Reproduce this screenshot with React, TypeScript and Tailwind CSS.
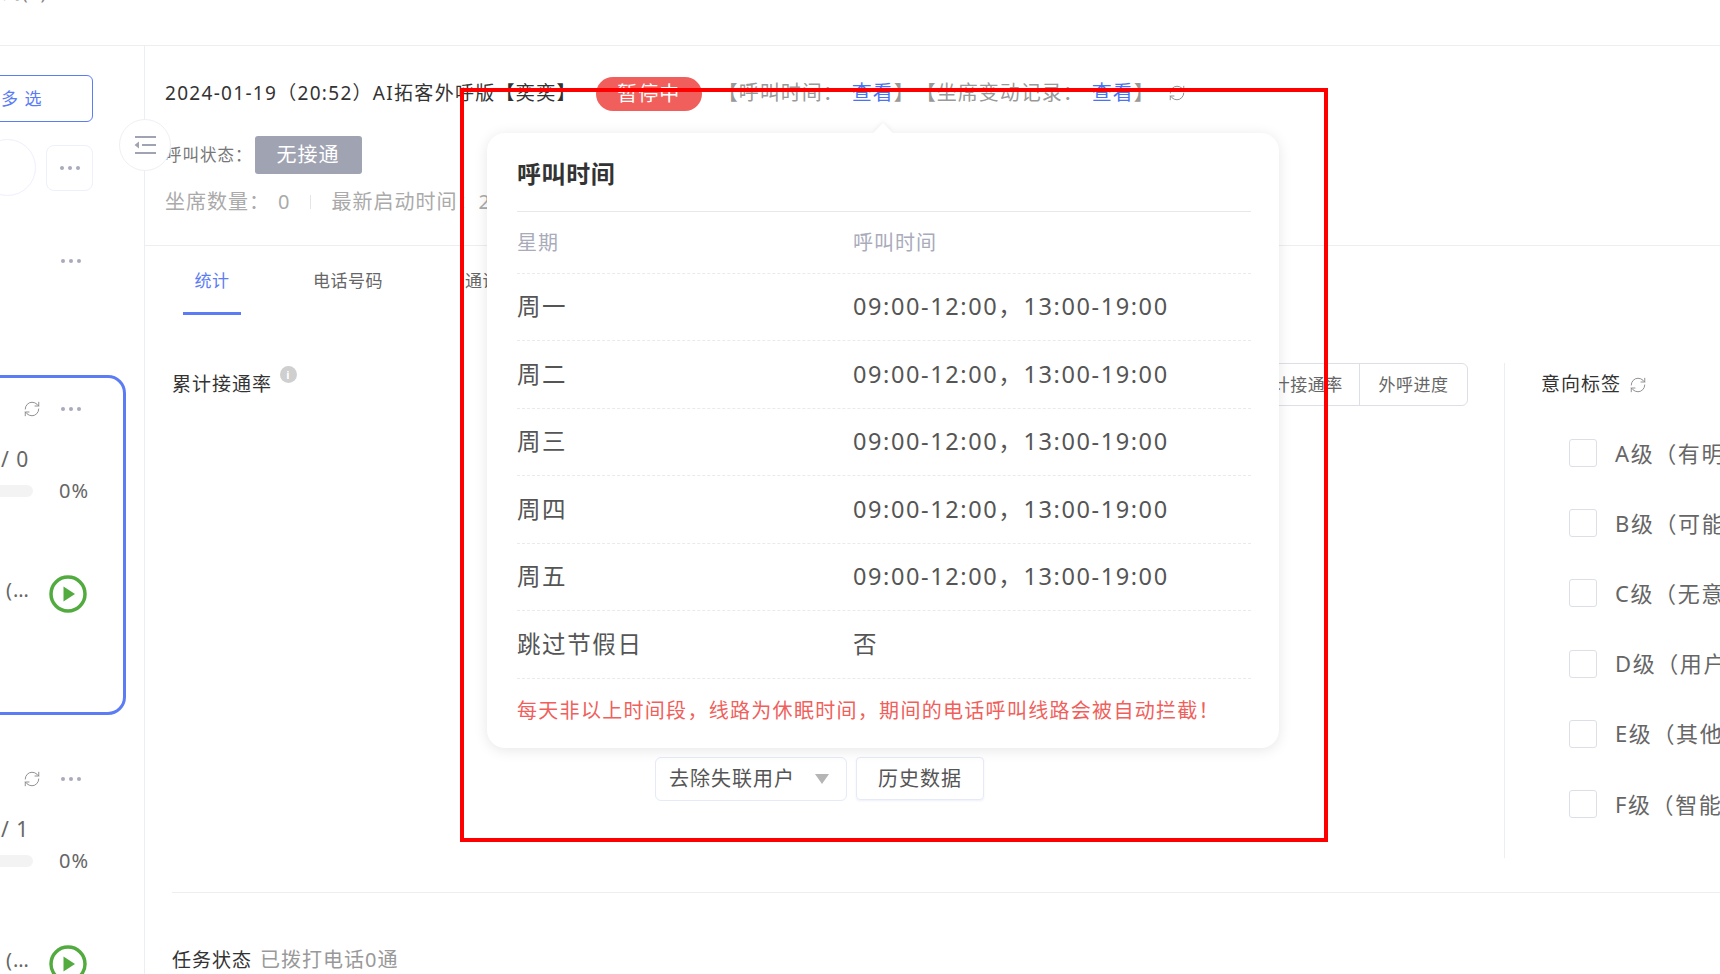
import { RefreshCw } from "lucide-react";

const schedule = [
  { day: "周一", time: "09:00-12:00，13:00-19:00" },
  { day: "周二", time: "09:00-12:00，13:00-19:00" },
  { day: "周三", time: "09:00-12:00，13:00-19:00" },
  { day: "周四", time: "09:00-12:00，13:00-19:00" },
  { day: "周五", time: "09:00-12:00，13:00-19:00" },
  { day: "跳过节假日", time: "否" },
];

const tags = [
  "A级（有明确意向）",
  "B级（可能有意向）",
  "C级（无意向）",
  "D级（用户忙）",
  "E级（其他）",
  "F级（智能标签）",
];

function Dots() {
  return (
    <div className="flex w-[20px] items-center justify-between">
      <span className="h-[4px] w-[4px] rounded-full bg-[#a9abbb]" />
      <span className="h-[4px] w-[4px] rounded-full bg-[#a9abbb]" />
      <span className="h-[4px] w-[4px] rounded-full bg-[#a9abbb]" />
    </div>
  );
}

function PlayIcon() {
  return (
    <svg width="38" height="38" viewBox="0 0 38 38" className="shrink-0">
      <circle cx="19" cy="19" r="17" fill="none" stroke="#52ab3f" strokeWidth="3.5" />
      <path d="M14.5 11.5 L26 19 L14.5 26.5 Z" fill="#52ab3f" />
    </svg>
  );
}

function TaskCard({ count, active }: { count: string; active?: boolean }) {
  return (
    <div
      className={`ml-[-20px] h-[340px] w-[146px] rounded-[18px] border-[3px] pt-[21px] ${
        active ? "border-[#5b7cf5]" : "border-transparent"
      }`}
    >
      <div className="flex h-[20px] items-center justify-end gap-[20px] pr-[42px]">
        <RefreshCw size={18} strokeWidth={1.25} color="#8a8a8a" />
        <Dots />
      </div>
      <div className="mt-[27px] flex h-[28px] items-center pl-[18px] text-[21px] text-[#666]">/&nbsp;{count}</div>
      <div className="mt-[5px] flex h-[24px] items-center gap-[26px]">
        <div className="h-[12px] w-[50px] rounded-full bg-[#f3f3f3]" />
        <span className="text-[20px] text-[#666]">0%</span>
      </div>
      <div className="mt-[72px] flex h-[38px] items-center gap-[16px] pl-[23px]">
        <span className="w-[27px] pb-[8px] text-[20px] leading-none whitespace-nowrap text-[#666]">(…</span>
        <PlayIcon />
      </div>
      {active && <div className="ml-[12px] text-[18px] leading-none text-[#666]">,</div>}
    </div>
  );
}

function Sidebar() {
  return (
    <aside className="w-[145px] shrink-0 overflow-hidden border-r border-[#eceef2]">
      <div className="mt-[29px] ml-[-20px] flex h-[47px] w-[113px] items-center rounded-[6px] border border-[#5b7cf5] pl-[20px] text-[17px] text-[#5b7cf5]">
        多 选
      </div>
      <div className="mt-[17px] flex h-[57px] items-center">
        <div className="ml-[-21px] h-[57px] w-[57px] shrink-0 rounded-full border border-[#eef0fb]" />
        <div className="ml-[10px] flex h-[46px] w-[47px] shrink-0 items-center justify-center rounded-[8px] border border-[#eef0fb]">
          <Dots />
        </div>
      </div>
      <div className="mt-[63px] ml-[61px]">
        <Dots />
      </div>
      <div className="mt-[112px] flex flex-col gap-[30px]">
        <TaskCard count="0" active />
        <TaskCard count="1" />
      </div>
    </aside>
  );
}

function HeaderInfo() {
  return (
    <div className="h-[200px] border-b border-[#eceef2] pt-[30px] pl-[20px]">
      <div className="flex h-[34px] items-center whitespace-nowrap">
        <span className="text-[19px] tracking-[1.3px] text-[#333]">2024-01-19（20:52）AI拓客外呼版【奕奕】</span>
        <span className="mt-[2px] ml-[19px] flex h-[34px] w-[106px] items-center justify-center rounded-full bg-[#f05f5c] text-[20px] text-white">
          暂停中
        </span>
        <span className="ml-[16px] text-[20px] text-[#999]">
          【呼叫时间：<span className="ml-[8px] text-[#4a72f5]">查看</span>】
          <span className="ml-[11px]">【坐席变动记录：</span>
          <span className="ml-[8px] text-[#4a72f5]">查看</span>】
        </span>
        <RefreshCw size={18} strokeWidth={1.25} color="#8a8a8a" className="ml-[13px]" />
      </div>
      <div className="mt-[26px] flex h-[38px] items-center whitespace-nowrap">
        <span className="text-[16.5px] text-[#777]">呼叫状态：</span>
        <span className="ml-[2px] flex h-[38px] w-[107px] items-center justify-center rounded-[3px] bg-[#a0a3b1] text-[20px] text-white">
          无接通
        </span>
      </div>
      <div className="mt-[14px] flex h-[28px] items-center whitespace-nowrap text-[20px] text-[#aaa]">
        <span>坐席数量：</span>
        <span className="ml-[8px]">0</span>
        <span className="mx-[20px] h-[14px] w-px bg-[#e5e5e5]" />
        <span>最新启动时间：2024-01-19</span>
      </div>
    </div>
  );
}

function Tabs() {
  return (
    <div className="flex h-[69px] pl-[38px] text-[17px] tracking-[0.5px] whitespace-nowrap text-[#666]">
      <div className="flex h-[69px] w-[58px] items-center justify-center border-b-[3px] border-[#5b7cf5] pt-[3px] text-[#5b7cf5]">
        统计
      </div>
      <div className="ml-[72px] flex items-center">电话号码</div>
      <div className="ml-[82px] flex items-center">通话记录</div>
    </div>
  );
}

function TagPanel() {
  return (
    <div className="w-[216px] shrink-0 border-l border-[#eceef2] pl-[36px]">
      <div className="flex h-[43px] items-center gap-[8px] text-[19px] whitespace-nowrap text-[#333]">
        意向标签
        <RefreshCw size={18} strokeWidth={1.25} color="#8a8a8a" />
      </div>
      <div className="mt-[12px]">
        {tags.map((tag) => (
          <div key={tag} className="flex h-[70.2px] items-center whitespace-nowrap">
            <span className="ml-[28px] h-[28px] w-[28px] shrink-0 rounded-[3px] border border-[#dcdfe6]" />
            <span className="ml-[18px] text-[22px] tracking-[1.6px] text-[#666]">{tag}</span>
          </div>
        ))}
      </div>
    </div>
  );
}

function Stats() {
  return (
    <div className="mt-[48px] flex h-[495px]">
      <div className="min-w-0 flex-1 pl-[27px]">
        <div className="flex h-[43px] items-center justify-between pr-[36px]">
          <div className="flex items-start gap-[8px] text-[19px] text-[#333]">
            累计接通率
            <span className="mt-[-4px] flex h-[17px] w-[17px] items-center justify-center rounded-full bg-[#cfcfcf] text-[11px] font-bold leading-none text-white">
              i
            </span>
          </div>
          <div className="flex h-[43px] items-center rounded-[6px] border border-[#dcdfe6] text-[17px] tracking-[0.5px] text-[#666]">
            <span className="flex h-full w-[121px] items-center justify-center border-r border-[#dcdfe6]">累计接通率</span>
            <span className="flex h-full w-[107px] items-center justify-center">外呼进度</span>
          </div>
        </div>
        <div className="mt-[351px] ml-[483px] flex items-start gap-[9px] text-[20px] whitespace-nowrap text-[#555]">
          <div className="flex h-[44px] w-[192px] items-center justify-between rounded-[6px] border border-[#e6e9f8] pr-[17px] pl-[13px]">
            去除失联用户
            <span className="h-0 w-0 border-x-[7px] border-t-[10px] border-x-transparent border-t-[#b5b5b5]" />
          </div>
          <div className="flex h-[43px] w-[128px] items-center justify-center rounded-[4px] border border-[#e6e9f8] shadow-[0_1px_2px_rgba(90,110,220,0.1)]">
            历史数据
          </div>
        </div>
      </div>
      <TagPanel />
    </div>
  );
}

function CallTimePopover() {
  return (
    <div className="absolute top-[133px] left-[487px] flex h-[615px] w-[792px] flex-col rounded-[18px] bg-white pr-[28px] pl-[30px] shadow-[0_2px_14px_rgba(0,0,0,0.1)]">
      <span className="absolute top-[-7px] left-[389px] h-[14px] w-[14px] rotate-45 bg-white shadow-[-2px_-2px_4px_rgba(0,0,0,0.04)]" />
      <div className="flex h-[79px] shrink-0 items-center border-b border-[#e8e8ec] pt-[3px] text-[24px] font-bold tracking-[0.6px] text-[#333]">
        呼叫时间
      </div>
      <div className="flex h-[61.5px] shrink-0 items-center border-b border-dashed border-[#eaeaea] pt-[1px] text-[20px] text-[#a9abbb]">
        <span className="w-[336px]">星期</span>
        <span>呼叫时间</span>
      </div>
      {schedule.map((row) => (
        <div
          key={row.day}
          className="flex h-[67.5px] shrink-0 items-center border-b border-dashed border-[#eaeaea] text-[23.5px] tracking-[1.6px] text-[#555]"
        >
          <span className="w-[336px]">{row.day}</span>
          <span>{row.time}</span>
        </div>
      ))}
      <div className="flex flex-1 items-center pb-[4px] text-[20px] tracking-[1.3px] whitespace-nowrap text-[#f05f5c]">
        每天非以上时间段，线路为休眠时间，期间的电话呼叫线路会被自动拦截！
      </div>
    </div>
  );
}

export default function App() {
  return (
    <div className="relative flex h-[974px] w-[1720px] flex-col overflow-hidden bg-white font-['Noto_Sans','Noto_Sans_CJK_SC',sans-serif] tracking-[1px]">
      <div className="h-[46px] shrink-0 border-b border-[#eceef2]">
        <div className="mt-[-22px] pl-[2px] text-[19px] text-[#888]">列(1)</div>
      </div>
      <div className="flex min-h-0 flex-1">
        <Sidebar />
        <main className="min-w-0 flex-1">
          <HeaderInfo />
          <Tabs />
          <Stats />
          <div className="mt-[34px] ml-[27px] border-t border-[#eceef2]" />
          <div className="mt-[52px] ml-[27px] flex h-[30px] items-center gap-[8px] text-[19px] whitespace-nowrap text-[#333]">
            任务状态
            <span className="text-[20px] text-[#999]">已拨打电话0通</span>
          </div>
        </main>
      </div>

      {/* 收起侧栏按钮 */}
      <div className="absolute top-[119px] left-[119px] flex h-[52px] w-[52px] items-center justify-center rounded-full border border-[#eef0f5] bg-white">
        <svg width="24" height="24" viewBox="0 0 24 24" fill="none" stroke="#a0a3b1" strokeWidth="2.2">
          <path d="M2 4h21M9 12h14M2 20h21" />
          <path d="M6 8.5v7L1.5 12z" fill="#a0a3b1" stroke="none" />
        </svg>
      </div>

      <CallTimePopover />
      <div className="pointer-events-none absolute top-[88px] left-[460px] h-[754px] w-[868px] border-[4px] border-[#ff0000]" />
    </div>
  );
}
